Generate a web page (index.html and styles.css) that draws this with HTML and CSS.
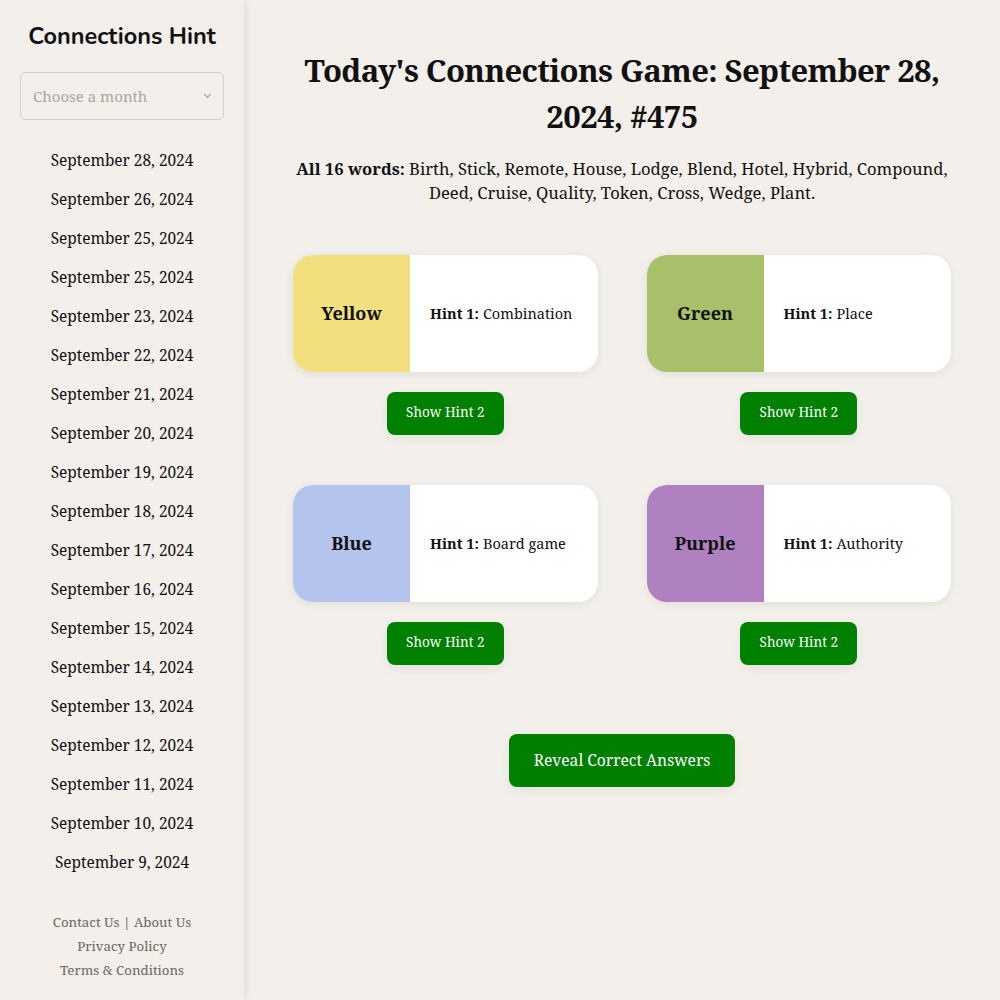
FILE: index.html
```html
<!DOCTYPE html>
<html lang="en">
<head>
<meta charset="utf-8">
<title>Connections Hint</title>
<link rel="stylesheet" href="styles.css">
</head>
<body>
<div class="layout">
  <aside class="sidebar">
    <h2 class="brand">Connections Hint</h2>
    <div class="select-wrap">
      <select class="month-select">
        <option>Choose a month</option>
      </select>
    </div>
    <ul class="dates">
      <li>September 28, 2024</li>
      <li>September 26, 2024</li>
      <li>September 25, 2024</li>
      <li>September 25, 2024</li>
      <li>September 23, 2024</li>
      <li>September 22, 2024</li>
      <li>September 21, 2024</li>
      <li>September 20, 2024</li>
      <li>September 19, 2024</li>
      <li>September 18, 2024</li>
      <li>September 17, 2024</li>
      <li>September 16, 2024</li>
      <li>September 15, 2024</li>
      <li>September 14, 2024</li>
      <li>September 13, 2024</li>
      <li>September 12, 2024</li>
      <li>September 11, 2024</li>
      <li>September 10, 2024</li>
      <li>September 9, 2024</li>
    </ul>
    <div class="footer-links">
      <div>Contact Us <span class="sep">|</span> About Us</div>
      <div>Privacy Policy</div>
      <div>Terms &amp; Conditions</div>
    </div>
  </aside>
  <main class="main">
    <h1 class="title">Today's Connections Game: September 28, 2024, #475</h1>
    <p class="words"><b>All 16 words:</b> Birth, Stick, Remote, House, Lodge, Blend, Hotel, Hybrid, Compound, Deed, Cruise, Quality, Token, Cross, Wedge, Plant.</p>
    <div class="grid">
      <div class="item">
        <div class="card">
          <div class="swatch yellow">Yellow</div>
          <div class="hint"><b>Hint 1:</b> Combination</div>
        </div>
        <button class="btn">Show Hint 2</button>
      </div>
      <div class="item">
        <div class="card">
          <div class="swatch green">Green</div>
          <div class="hint"><b>Hint 1:</b> Place</div>
        </div>
        <button class="btn">Show Hint 2</button>
      </div>
      <div class="item">
        <div class="card">
          <div class="swatch blue">Blue</div>
          <div class="hint"><b>Hint 1:</b> Board game</div>
        </div>
        <button class="btn">Show Hint 2</button>
      </div>
      <div class="item">
        <div class="card">
          <div class="swatch purple">Purple</div>
          <div class="hint"><b>Hint 1:</b> Authority</div>
        </div>
        <button class="btn">Show Hint 2</button>
      </div>
    </div>
    <div class="reveal-wrap">
      <button class="btn reveal">Reveal Correct Answers</button>
    </div>
  </main>
</div>
</body>
</html>
```
FILE: styles.css
```css
* { box-sizing: border-box; }
html, body {
  margin: 0;
  padding: 0;
  background: #f3efea;
  font-family: "Noto Serif", "Liberation Serif", serif;
  color: #111;
}
.layout {
  display: flex;
  min-height: 1000px;
}
.sidebar {
  width: 244px;
  flex: none;
  background: #f3efea;
  box-shadow: 2px 0 8px rgba(0,0,0,0.08);
  padding: 20px 20px 0;
  text-align: center;
  position: relative;
  z-index: 1;
}
.brand {
  font-family: "Nunito", "Noto Sans", "Lato", sans-serif;
  font-weight: 700;
  font-size: 23.5px;
  line-height: 30px;
  margin: 1px 0 21px;
  color: #111;
}
.select-wrap {
  position: relative;
}
.month-select {
  width: 100%;
  height: 48px;
  appearance: none;
  -webkit-appearance: none;
  background: transparent;
  border: 1px solid #d4d0cb;
  border-radius: 5px;
  padding: 0 12px;
  font-family: inherit;
  font-size: 15px;
  color: #a9a6a2;
}
.select-wrap::after {
  content: "";
  position: absolute;
  right: 14px;
  top: 20px;
  width: 4px;
  height: 4px;
  border-right: 1.3px solid #999;
  border-bottom: 1.3px solid #999;
  transform: rotate(45deg);
}
.dates {
  list-style: none;
  margin: 21px 0 0;
  padding: 0;
}
.dates li {
  font-size: 15.4px;
  line-height: 39px;
  color: #111;
}
.footer-links {
  margin-top: 28px;
  font-size: 13.3px;
  line-height: 24px;
  color: #6b6763;
}
.sep { color: #555; }
.main {
  flex: 1;
  padding: 47px 49px 40px;
}
.title {
  font-size: 31px;
  font-weight: 700;
  letter-spacing: -0.6px;
  line-height: 46px;
  text-align: center;
  margin: 0 0 18px;
}
.words {
  font-size: 16.6px;
  line-height: 24px;
  text-align: center;
  margin: 0 0 50px;
}
.grid {
  display: grid;
  grid-template-columns: 1fr 1fr;
  column-gap: 49px;
  row-gap: 50px;
}
.item {
  display: flex;
  flex-direction: column;
  align-items: center;
}
.card {
  width: 100%;
  height: 117px;
  display: flex;
  background: #fff;
  border-radius: 20px;
  overflow: hidden;
  box-shadow: 0 2px 10px rgba(0,0,0,0.08);
}
.swatch {
  width: 117px;
  flex: none;
  display: flex;
  align-items: center;
  justify-content: center;
  font-size: 18px;
  font-weight: 700;
  padding-bottom: 2px;
}
.yellow { background: #f3df7e; }
.green { background: #a9c06b; }
.blue { background: #b4c4ec; }
.purple { background: #b081c0; }
.hint {
  display: flex;
  align-items: center;
  padding-left: 20px;
  padding-bottom: 2px;
  font-size: 14.5px;
}
.hint b { margin-right: 4px; }
.btn {
  margin-top: 20px;
  width: 117px;
  height: 43px;
  background: #008000;
  color: #fff;
  border: none;
  border-radius: 8px;
  font-family: inherit;
  font-size: 13.5px;
  padding: 0 0 3px;
  box-shadow: 0 4px 12px rgba(0,0,0,0.06);
}
.reveal-wrap {
  display: flex;
  justify-content: center;
  margin-top: 69px;
}
.reveal {
  margin-top: 0;
  width: 226px;
  height: 53px;
  font-size: 15.6px;
  padding-bottom: 2px;
}
```
